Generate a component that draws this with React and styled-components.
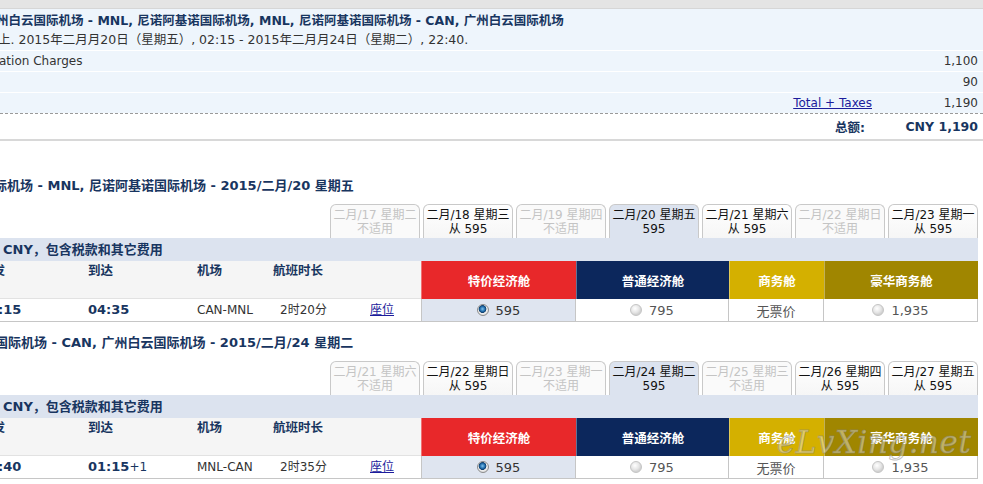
import * as React from 'react'
import styled, { createGlobalStyle, css } from 'styled-components'

const GlobalStyle = createGlobalStyle`
  html, body {
    margin: 0;
    padding: 0;
    background: #fff;
    overflow: hidden;
  }
  body {
    font-family: "DejaVu Sans", "Noto Sans CJK SC", sans-serif;
    font-size: 12px;
    color: #333;
  }
`

const navy = '#183560'

const Page = styled.div`
  position: relative;
  width: 983px;
  height: 484px;
  overflow: hidden;
`

// the page is scrolled a little to the right, so everything starts left of the view
const Canvas = styled.div`
  width: 1003px;
  margin-left: -20px;
`

const TopBar = styled.div`
  height: 8px;
  background: #e4e4e4;
  border-bottom: 1px solid #d6d6d6;
`

const Summary = styled.div`
  background: #eef5fc;
`

const Route = styled.div`
  padding: 2px 0 1px 16px;
  line-height: 19px;
  white-space: nowrap;
  div:first-child {
    font-weight: bold;
    font-size: 12.5px;
    color: ${navy};
  }
  div + div {
    color: #333;
    font-size: 12.5px;
    padding-left: 2px;
  }
`

const ChargeRow = styled.div`
  display: grid;
  grid-template-columns: 1fr 106px;
  align-items: center;
  height: 20px;
  border-top: 1px solid #fff;
  padding: 0 5px 0 19px;
  color: #333;
  span:last-child {
    text-align: right;
  }
  a {
    justify-self: end;
    color: #1c1c9c;
    text-decoration: underline;
  }
`

const TotalRow = styled.div`
  display: grid;
  grid-template-columns: 1fr 113px;
  align-items: center;
  height: 25px;
  border-top: 1px dashed #9a9a9a;
  border-bottom: 2px solid #d8d8d8;
  padding-right: 5px;
  background: #fff;
  font-weight: bold;
  color: ${navy};
  font-size: 12.5px;
  span {
    text-align: right;
  }
`

const SectionTitle = styled.div`
  padding: ${({ $top }) => $top}px 0 0 ${({ $indent }) => $indent}px;
  line-height: 18px;
  font-weight: bold;
  font-size: 13px;
  white-space: nowrap;
  color: ${navy};
`

const Tabs = styled.div`
  display: flex;
  justify-content: flex-end;
  gap: 3px;
  margin-top: ${({ $top }) => $top}px;
  padding-right: 5px;
`

const tabKinds = {
  off: css`
    color: #c4c4c4;
    background: #fafafa;
  `,
  on: css`
    color: #111;
    background: linear-gradient(#fff, #f6f6f6);
  `,
  current: css`
    color: #111;
    background: #dce3ef;
  `,
}

const Tab = styled.div`
  box-sizing: border-box;
  width: 90px;
  height: 34px;
  padding-top: 3px;
  border: 1px solid #c9c9c9;
  border-bottom: none;
  border-radius: 6px 6px 0 0;
  text-align: center;
  line-height: 14px;
  white-space: nowrap;
  ${({ $kind }) => tabKinds[$kind]}
`

const FareBlock = styled.div`
  margin-right: 5px;
`

const PriceBar = styled.div`
  height: 23px;
  line-height: 23px;
  padding-left: 23px;
  background: #dce3ef;
  font-weight: bold;
  font-size: 13px;
  color: ${navy};
`

const Grid = styled.div`
  display: grid;
  grid-template-columns: 108px 109px 76px 97px 51px 155px 153px 95px 154px;
`

const HeadCell = styled.div`
  height: 38px;
  box-sizing: border-box;
  padding-top: 1px;
  background: #f5f5f5;
  border-bottom: 1px solid #e2e2e2;
  font-weight: bold;
  font-size: 12.5px;
  color: ${navy};
  line-height: 18px;
  white-space: nowrap;
`

const cabinColors = {
  promo: '#e8282a',
  economy: '#0c275c',
  business: '#d4b000',
  premier: '#a08600',
}

const CabinHead = styled.div`
  height: 38px;
  display: flex;
  align-items: center;
  justify-content: center;
  background: ${({ $cabin }) => cabinColors[$cabin]};
  border-left: 1px solid rgba(255, 255, 255, 0.35);
  color: #fff;
  font-weight: bold;
  font-size: 12.5px;
`

const DataCell = styled.div`
  height: 22px;
  line-height: 22px;
  padding-left: ${({ $pad }) => $pad || 0}px;
  border-bottom: 1px solid #c6c6c6;
  color: #333;
  white-space: nowrap;
  ${({ $strong }) =>
    $strong &&
    css`
      font-weight: bold;
      color: ${navy};
      font-size: 13px;
    `}
  small {
    font-size: 12px;
    font-weight: normal;
  }
  a {
    color: #1c1c9c;
    text-decoration: underline;
  }
`

const FareCell = styled.div`
  height: 22px;
  display: flex;
  align-items: center;
  justify-content: center;
  gap: 7px;
  border: 1px solid #c6c6c6;
  border-top: none;
  border-left-width: ${({ $first }) => ($first ? 1 : 0)}px;
  background: ${({ $picked }) => ($picked ? '#dfe5f0' : '#fff')};
  color: ${({ $picked }) => ($picked ? '#333' : '#555')};
  font-size: 13px;
`

const Radio = styled.span`
  box-sizing: border-box;
  width: 12px;
  height: 12px;
  border-radius: 50%;
  border: 1px solid ${({ $checked }) => ($checked ? '#8c8c8c' : '#c4c4c4')};
  background: ${({ $checked }) =>
    $checked
      ? 'radial-gradient(circle at 45% 40%, #7ec2ee 0, #1f6aa8 2.5px, #0e3d6c 3.6px, #f2f2f2 4.2px, #dcdcdc 6px)'
      : 'radial-gradient(circle at 40% 35%, #ffffff 0, #e6e6e6 4px, #d2d2d2 6px)'};
`

const Watermark = styled.div`
  position: absolute;
  left: 777px;
  top: 424px;
  font-family: "DejaVu Serif", serif;
  font-style: italic;
  font-size: 31px;
  letter-spacing: 0.5px;
  color: rgba(255, 255, 255, 0.4);
  -webkit-text-stroke: 1px rgba(130, 130, 130, 0.5);
  pointer-events: none;
`

const Fare = ({ price, picked, first }) => (
  <FareCell $picked={picked} $first={first}>
    {price ? (
      <>
        <Radio $checked={picked} />
        {price}
      </>
    ) : (
      '无票价'
    )}
  </FareCell>
)

const Flight = ({ title, titleTop, tabsTop, indent, tabs, dep, arr, route, duration }) => (
  <>
    <SectionTitle $top={titleTop} $indent={indent}>
      {title}
    </SectionTitle>
    <Tabs $top={tabsTop}>
      {tabs.map(([date, price, kind]) => (
        <Tab key={date} $kind={kind}>
          {date}
          <br />
          {price}
        </Tab>
      ))}
    </Tabs>
    <FareBlock>
      <PriceBar>CNY，包含税款和其它费用</PriceBar>
      <Grid>
        <HeadCell>出发</HeadCell>
        <HeadCell>到达</HeadCell>
        <HeadCell>机场</HeadCell>
        <HeadCell>航班时长</HeadCell>
        <HeadCell />
        <CabinHead $cabin="promo">特价经济舱</CabinHead>
        <CabinHead $cabin="economy">普通经济舱</CabinHead>
        <CabinHead $cabin="business">商务舱</CabinHead>
        <CabinHead $cabin="premier">豪华商务舱</CabinHead>

        <DataCell $strong>{dep}</DataCell>
        <DataCell $strong>{arr}</DataCell>
        <DataCell>{route}</DataCell>
        <DataCell $pad={7}>{duration}</DataCell>
        <DataCell>
          <a>座位</a>
        </DataCell>
        <Fare price="595" picked first />
        <Fare price="795" />
        <Fare />
        <Fare price="1,935" />
      </Grid>
    </FareBlock>
  </>
)

const outboundTabs = [
  ['二月/17 星期二', '不适用', 'off'],
  ['二月/18 星期三', '从 595', 'on'],
  ['二月/19 星期四', '不适用', 'off'],
  ['二月/20 星期五', '595', 'current'],
  ['二月/21 星期六', '从 595', 'on'],
  ['二月/22 星期日', '不适用', 'off'],
  ['二月/23 星期一', '从 595', 'on'],
]

const returnTabs = [
  ['二月/21 星期六', '不适用', 'off'],
  ['二月/22 星期日', '从 595', 'on'],
  ['二月/23 星期一', '不适用', 'off'],
  ['二月/24 星期二', '595', 'current'],
  ['二月/25 星期三', '不适用', 'off'],
  ['二月/26 星期四', '从 595', 'on'],
  ['二月/27 星期五', '从 595', 'on'],
]

export default function App() {
  return (
    <Page>
      <GlobalStyle />
      <Canvas>
        <TopBar />
        <Summary>
          <Route>
            <div>州白云国际机场 - MNL, 尼诺阿基诺国际机场, MNL, 尼诺阿基诺国际机场 - CAN, 广州白云国际机场</div>
            <div>上. 2015年二月月20日（星期五）, 02:15 - 2015年二月月24日（星期二）, 22:40.</div>
          </Route>
          <ChargeRow>
            <span>ation Charges</span>
            <span>1,100</span>
          </ChargeRow>
          <ChargeRow>
            <span />
            <span>90</span>
          </ChargeRow>
          <ChargeRow>
            <a>Total + Taxes</a>
            <span>1,190</span>
          </ChargeRow>
        </Summary>
        <TotalRow>
          <span>总额:</span>
          <span>CNY 1,190</span>
        </TotalRow>

        <Flight
          title="际机场 - MNL, 尼诺阿基诺国际机场 - 2015/二月/20 星期五"
          titleTop={36}
          tabsTop={9}
          indent={14}
          tabs={outboundTabs}
          dep="02:15"
          arr="04:35"
          route="CAN-MNL"
          duration="2时20分"
        />
        <Flight
          title="国际机场 - CAN, 广州白云国际机场 - 2015/二月/24 星期二"
          titleTop={12}
          tabsTop={9}
          indent={15}
          tabs={returnTabs}
          dep="22:40"
          arr={
            <>
              01:15<small>+1</small>
            </>
          }
          route="MNL-CAN"
          duration="2时35分"
        />
      </Canvas>
      <Watermark>eLvXing.net</Watermark>
    </Page>
  )
}
